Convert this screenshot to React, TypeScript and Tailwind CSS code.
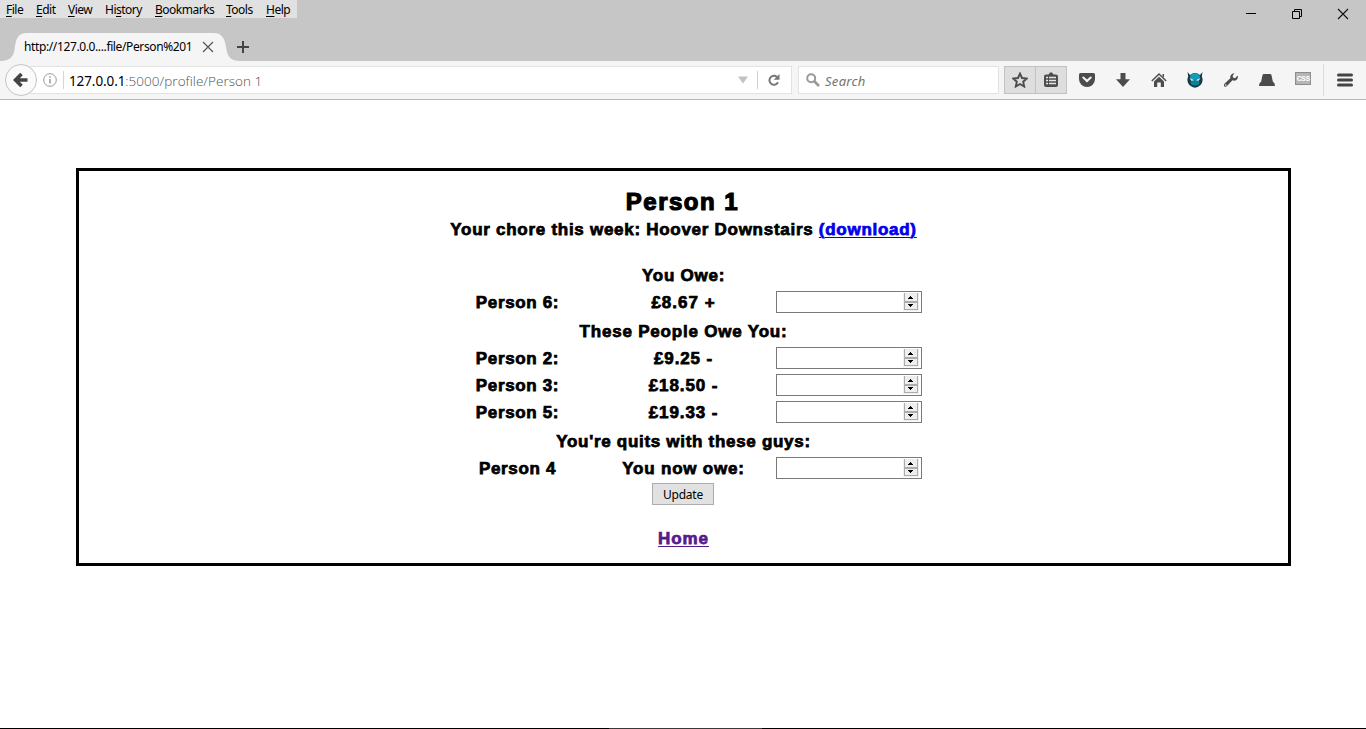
import React from "react";

const MENU = [
  ["", "F", "ile", "w-[30px]"],
  ["", "E", "dit", "w-[32px]"],
  ["", "V", "iew", "w-[37px]"],
  ["Hi", "s", "tory", "w-[50px]"],
  ["", "B", "ookmarks", "w-[71px]"],
  ["", "T", "ools", "w-[40px]"],
  ["", "H", "elp", "w-[31px]"],
];

function TitleBar() {
  return (
    <div className="flex h-[61px] justify-between bg-[#c6c6c6]">
      <div className="flex flex-col justify-between">
        <div className="flex h-[18px] w-[297px] items-center bg-[#e1e1e1] pl-[6px] pt-px text-[12px] leading-[18px] tracking-[-0.5px] text-black">
          {MENU.map(([a, u, b, w]) => (
            <span key={u + b} className={"shrink-0 whitespace-nowrap " + w}>
              {a}
              <span className="underline underline-offset-[2px]">{u}</span>
              {b}
            </span>
          ))}
        </div>
        <div className="flex h-[28px] items-start">
          <div className="relative flex h-[28px] w-[240px] items-center pl-[24px]">
            <svg className="absolute left-0 top-0" width="240" height="28" viewBox="0 0 240 28">
              <path d="M0 28C10 28 13 24 14.500 17C16 6 17 0 28 0H213C223 0 225 6 226.500 17C228 24 231 28 240 28Z" fill="#f5f5f5" />
            </svg>
            <span className="relative w-[170px] whitespace-nowrap text-[12px] leading-[28px] tracking-[-0.38px] text-black">http://127.0.0....file/Person%201</span>
            <svg className="relative ml-[8px]" width="12" height="12" viewBox="0 0 12 12">
              <path d="M1 1L11 11M11 1L1 11" stroke="#555" strokeWidth="1.2" />
            </svg>
          </div>
          <svg className="-ml-[3px] mt-[8px]" width="12" height="12" viewBox="0 0 12 12">
            <path d="M6 0V12M0 6H12" stroke="#444" strokeWidth="2" />
          </svg>
        </div>
      </div>
      <div className="flex items-start pr-[17px] pt-[8px]">
        <svg className="mr-[35px]" width="10" height="12" viewBox="0 0 10 12"><path d="M0 5.500H10" stroke="#000" /></svg>
        <svg className="mr-[34px]" width="12" height="12" viewBox="0 0 12 12" fill="none" stroke="#000">
          <path d="M1.500 3.500H8.500V10.500H1.500ZM3.500 3.500V1.500H10.500V8.500H8.500" />
        </svg>
        <svg width="12" height="12" viewBox="0 0 12 12"><path d="M1 1L11 11M11 1L1 11" stroke="#111" strokeWidth="1.100" /></svg>
      </div>
    </div>
  );
}

function ToolIcon({ children }: { children: React.ReactNode }) {
  return (
    <div className="flex w-[36px] shrink-0 items-center justify-center">
      <svg width="16" height="16" viewBox="0 0 16 16" fill="#4c4c4c">{children}</svg>
    </div>
  );
}

function NavBar() {
  return (
    <div className="flex h-[39px] items-center border-b border-[#b9b9b9] bg-[#f5f5f5]">
      <div className="relative z-10 ml-[5px] flex h-[32px] w-[32px] shrink-0 items-center justify-center rounded-full border border-[#c4c4c4] bg-[#fafafa]">
        <svg width="16" height="16" viewBox="0 0 16 16">
          <path d="M8.500 2L2.500 8L8.500 14M3 8H14.500" stroke="#444" strokeWidth="3.600" fill="none" />
        </svg>
      </div>
      <div className="-ml-[7px] flex h-[28px] w-[762px] shrink-0 items-center border border-[#e2e2e2] bg-white pl-[12px]">
        <svg width="14" height="14" viewBox="0 0 14 14">
          <circle cx="7" cy="7" r="6.300" fill="none" stroke="#999" />
          <path d="M7 6V10.500M7 3.300V4.800" stroke="#888" strokeWidth="1.300" />
        </svg>
        <div className="ml-[6px] h-[18px] w-px bg-[#d5d5d5]" />
        <div className="ml-[5px] w-[669px] whitespace-nowrap pt-[2px] font-['Open_Sans'] text-[13.5px] font-light tracking-[0.05px] text-[#505050]">
          <span className="font-['Noto_Sans'] font-normal tracking-[-0.1px] text-black">127.0.0.1</span>:5000/profile/Person 1
        </div>
        <svg width="10" height="8" viewBox="0 0 10 8"><path d="M0 0.500H10L5 7.500Z" fill="#c3c3c3" /></svg>
        <div className="ml-[9px] h-[18px] w-px bg-[#d0d0d0]" />
        <svg className="ml-[10px]" width="12" height="12" viewBox="0 0 12 12">
          <path d="M9 3A4.500 4.500 0 1 0 10 8.300" fill="none" stroke="#777" strokeWidth="2" />
          <path d="M11.500 0V5.800H5.700Z" fill="#777" />
        </svg>
      </div>
      <div className="ml-[6px] flex h-[28px] w-[201px] shrink-0 items-center border border-[#e2e2e2] bg-white pl-[7px]">
        <svg width="14" height="14" viewBox="0 0 14 14">
          <circle cx="5.200" cy="5.200" r="4" fill="none" stroke="#999" strokeWidth="2" />
          <path d="M8 8L13 13" stroke="#999" strokeWidth="2.600" />
        </svg>
        <span className="ml-[5px] pt-[3px] text-[13px] italic tracking-[0.3px] text-[#737373]">Search</span>
      </div>
      <div className="ml-[5px] flex h-[28px] w-[63px] shrink-0 border border-[#c2c2c2] bg-[#dedede]">
        <div className="flex w-[31px] items-center justify-center border-r border-[#c2c2c2]">
          <svg width="16" height="16" viewBox="0 0 16 16">
            <path d="M8 1.600L10 6L14.800 6.500L11.200 9.700L12.200 14.500L8 12L3.800 14.500L4.800 9.700L1.200 6.500L6 6Z" fill="none" stroke="#4c4c4c" strokeWidth="1.900" />
          </svg>
        </div>
        <div className="flex w-[30px] items-center justify-center">
          <svg width="14" height="16" viewBox="0 0 14 16">
            <path d="M2 2.500H4.500L6 0.500H8L9.500 2.500H12Q14 2.500 14 4.500V13Q14 15 12 15H2Q0 15 0 13V4.500Q0 2.500 2 2.500Z" fill="#4c4c4c" />
            <path d="M2 5.500H4M5 5.500H12M2 8.500H4M5 8.500H12M2 11.500H4M5 11.500H12" stroke="#e5e5e5" strokeWidth="1.300" />
          </svg>
        </div>
      </div>
      <div className="ml-[2px] flex">
        <ToolIcon>
          <path d="M1.500 1H14.500Q16 1 16 2.500V7A8 8 0 0 1 0 7V2.500Q0 1 1.500 1Z" />
          <path d="M4.300 5.500L8 9L11.700 5.500" fill="none" stroke="#f5f5f5" strokeWidth="2" strokeLinecap="round" />
        </ToolIcon>
        <ToolIcon><path d="M5.500 1H10.500V7.300H15L8 15L1 7.300H5.500Z" /></ToolIcon>
        <ToolIcon>
          <path d="M8 4.800L13 9.600V15H9.800V10.500H6.200V15H3V9.600Z" />
          <path d="M0.800 9L8 2L15.200 9" fill="none" stroke="#4c4c4c" strokeWidth="1.500" />
          <path d="M11.500 2H13V5.500L11.500 4Z" />
        </ToolIcon>
        <ToolIcon>
          <path d="M0.500 0L3 3Q8 -1 13 3L15.500 0L14.800 4.500Q17 9.500 13.300 13.300Q8 18 2.700 13.300Q-1 9.500 1.200 4.500Z" fill="#143a42" />
          <ellipse cx="8" cy="4.800" rx="5" ry="3.600" fill="#149bb8" />
          <ellipse cx="8" cy="10.500" rx="4.500" ry="3" fill="#0a7f96" />
          <path d="M2.500 6L7.300 8.300L4.300 8.800ZM13.500 6L8.700 8.300L11.700 8.800Z" fill="#d8f4f8" />
        </ToolIcon>
        <ToolIcon>
          <path d="M15 4.500Q15 8 11.500 8.800L9.500 8.300L4 14Q2.500 15.500 1.200 14.200Q0.200 13 1.700 11.600L7.300 6.200Q6.500 2 11.500 1.200L9.700 3.700L10 5.600L12 6.200L14.500 3.800Z" />
          <circle cx="2.700" cy="13" r="0.800" fill="#f5f5f5" />
        </ToolIcon>
        <ToolIcon><path d="M4.500 2H11.500Q12.300 2 12.600 3.500L13.800 9.500Q16 10.500 16 14H0Q0 10.500 2.200 9.500L3.400 3.500Q3.700 2 4.500 2Z" /></ToolIcon>
        <div className="flex w-[36px] items-center justify-center">
          <div className="mb-[3px] flex h-[13px] w-[16px] items-center justify-center border border-[#8c8c8c] bg-[#b5b5b5] font-['Liberation_Mono'] text-[8px] font-bold leading-[11px] tracking-[-0.5px] text-white">
            <span className="-mr-[0.5px]">CSS</span>
          </div>
        </div>
      </div>
      <div className="ml-[2px] h-[32px] w-px bg-[#dcdcdc]" />
      <svg className="ml-[13px]" width="16" height="14" viewBox="0 0 16 14">
        <path d="M1.500 2H14.500M1.500 7H14.500M1.500 12H14.500" stroke="#444" strokeWidth="3" strokeLinecap="round" />
      </svg>
    </div>
  );
}

function NumberBox() {
  return (
    <div className="mr-[2px] flex h-[22px] w-[146px] justify-end border border-[#7a7a7a] bg-white pr-[2px] pt-px">
      <svg width="16" height="18" viewBox="0 0 16 18" shapeRendering="crispEdges">
        <path d="M0 0H16V18H0Z" fill="#f0f0f0" />
        <path d="M1.500 0V8.500H14.500V0M1.500 9.500H14.500V16.500H1.500Z" fill="#eee" stroke="#acacac" />
        <path d="M7 3H8V4H9V5H10V6H5V5H6V4H7ZM5 11H10V12H9V13H8V14H7V13H6V12H5Z" fill="#000" />
      </svg>
    </div>
  );
}

function Row({ name, amount, amountClass }: { name: string; amount: string; amountClass: string }) {
  return (
    <div className="grid h-[27px] grid-cols-3 justify-items-center leading-[27px]">
      <span className="tracking-[0.65px]">{name}</span>
      <span className={amountClass}>{amount}</span>
      <div className="pt-[2px]"><NumberBox /></div>
    </div>
  );
}

export default function App() {
  return (
    <div className="flex h-[729px] w-[1366px] flex-col overflow-hidden bg-white font-['Noto_Sans','Open_Sans',sans-serif]">
      <TitleBar />
      <NavBar />
      <main className="flex-1 pl-[76px] pt-[68px]">
        <div className="flex h-[398px] w-[1215px] flex-col items-center border-[3px] border-black pt-[16px] font-['Liberation_Sans',Arial,sans-serif] text-[17px] font-bold leading-[24px] text-black [-webkit-text-stroke:0.75px_currentColor]">
          <h1 className="mr-[2px] h-[31px] text-[24px] leading-[30px] tracking-[1.5px] [-webkit-text-stroke:1.2px_currentColor]">Person 1</h1>
          <p className="h-[45px] whitespace-nowrap tracking-[0.72px]">
            Your chore this week: Hoover Downstairs <a className="text-[#0000ee] underline decoration-1 underline-offset-2">(download)</a>
          </p>
          <div className="w-[498px] text-center">
            <h2 className="h-[26px] pt-px tracking-[0.75px]">You Owe:</h2>
            <Row name="Person 6:" amount="£8.67 +" amountClass="tracking-[1px]" />
            <h2 className="h-[29px] pt-[4px] tracking-[0.8px]">These People Owe You:</h2>
            <Row name="Person 2:" amount="£9.25 -" amountClass="tracking-[0.85px]" />
            <Row name="Person 3:" amount="£18.50 -" amountClass="tracking-[0.9px]" />
            <Row name="Person 5:" amount="£19.33 -" amountClass="tracking-[0.9px]" />
            <h2 className="h-[29px] pt-[4px] tracking-[0.7px]">You're quits with these guys:</h2>
            <Row name="Person 4" amount="You now owe:" amountClass="tracking-[0.8px]" />
          </div>
          <button className="mr-px mt-px h-[22px] w-[62px] border border-[#adadad] bg-[#e1e1e1] font-['Noto_Sans',sans-serif] text-[12px] font-normal leading-[21px] tracking-[-0.2px] [-webkit-text-stroke:0px]">Update</button>
          <a className="mt-[22px] tracking-[0.9px] text-[#551a8b] underline decoration-1 underline-offset-2">Home</a>
        </div>
      </main>
      <footer className="flex h-px shrink-0 justify-center bg-black"><div className="ml-[5px] h-px w-[153px] bg-[#383838]" /></footer>
    </div>
  );
}
